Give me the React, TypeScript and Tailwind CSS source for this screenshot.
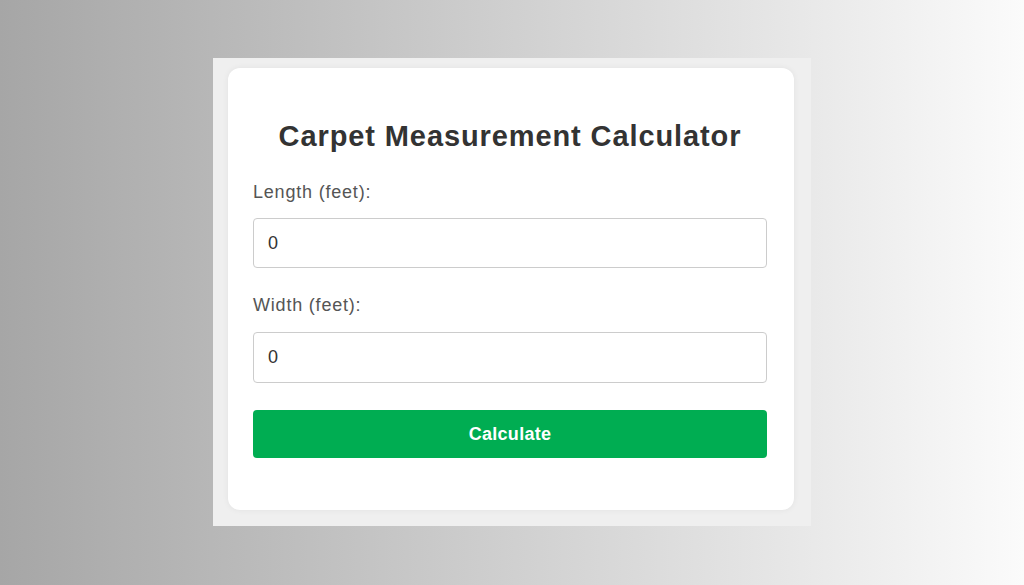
export default function App() {
  return (
    <div
      className="w-[1024px] h-[585px] flex items-start justify-center pt-[58px] bg-gradient-to-r from-[#a6a6a6] to-[#fbfbfb]"
      style={{ fontFamily: '"Liberation Sans", Arial, sans-serif' }}
    >
      {/* outer light panel */}
      <div className="w-[598px] h-[468px] bg-[#efefef] pt-[10px] pl-[15px]">
        {/* card */}
        <div className="w-[566px] h-[442px] bg-white rounded-[12px] shadow-[0_0_6px_rgba(0,0,0,0.06)] pl-[25px] pr-[27px] pt-[50px]">
          <h1 className="text-center text-[29px] font-bold text-[#333] leading-[36px] tracking-[0.9px] mb-[27px]">
            Carpet Measurement Calculator
          </h1>

          <label className="block text-[18px] text-[#555] leading-[22px] tracking-[0.8px] mb-[15px]">Length (feet):</label>
          <input
            type="number"
            defaultValue={0}
            className="block w-full h-[50px] border border-[#ccc] rounded-[4px] px-[14px] text-[18px] text-[#333] outline-none mb-[26px]"
          />

          <label className="block text-[18px] text-[#555] leading-[22px] tracking-[0.8px] mb-[16px]">Width (feet):</label>
          <input
            type="number"
            defaultValue={0}
            className="block w-full h-[51px] border border-[#ccc] rounded-[4px] px-[14px] text-[18px] text-[#333] outline-none mb-[27px]"
          />

          <button className="block w-full h-[48px] bg-[#00ad52] rounded-[4px] text-white text-[18px] font-bold tracking-[0.3px]">
            Calculate
          </button>
        </div>
      </div>
    </div>
  );
}
